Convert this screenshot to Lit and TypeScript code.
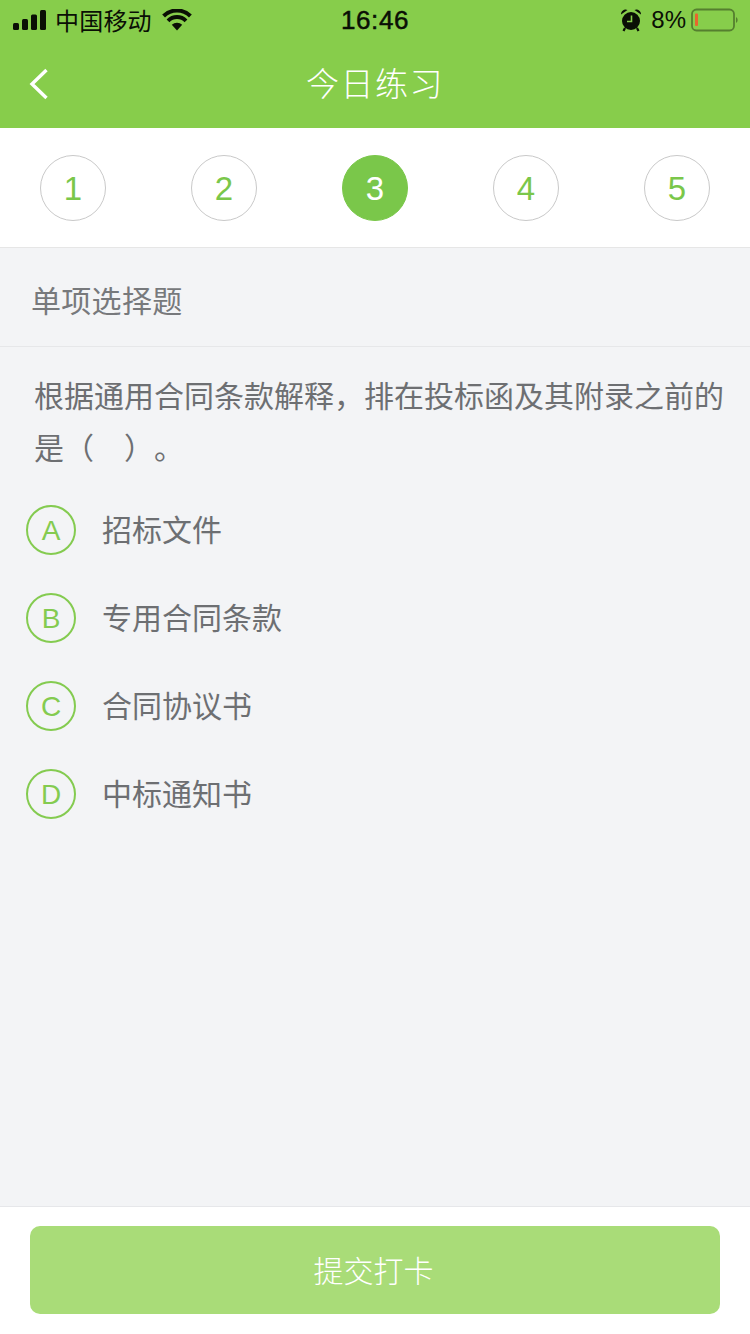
import { LitElement, html, css } from "lit";
import { customElement } from "lit/decorators.js";

@customElement("app-root")
export class AppRoot extends LitElement {
  static styles = css`
    :host {
      display: block;
      width: 750px;
      height: 1334px;
      font-family: "Noto Sans CJK SC", sans-serif;
      background: #f3f4f6;
    }
    .page { display: flex; flex-direction: column; height: 1334px; }
    .header { background: #87cd4b; height: 128px; display: flex; flex-direction: column; flex: none; }
    .status {
      height: 40px;
      display: grid;
      grid-template-columns: 1fr auto 1fr;
      align-items: center;
      padding: 0 13px;
      color: #0a0f05;
    }
    .status-left, .status-right { display: flex; align-items: center; }
    .status-right { justify-content: flex-end; }
    .carrier { font-size: 24px; line-height: 40px; margin-left: 8px; letter-spacing: 0.2px; font-weight: 400; }
    .wifi { margin-left: 10px; }
    .time { font-family: "Liberation Sans", sans-serif; font-size: 26px; line-height: 40px; -webkit-text-stroke: 0.5px #0a0f05; letter-spacing: 0.6px; }
    .pct { font-family: "Liberation Sans", sans-serif; font-size: 24px; margin-left: 9px; }
    .battery { margin-left: 5px; margin-right: -2px; }
    .nav { flex: 1; display: flex; align-items: center; justify-content: center; position: relative; padding-bottom: 5px; }
    .back { position: absolute; left: 29px; top: 28px; }
    .title { color: #fff; font-size: 33px; font-weight: 300; letter-spacing: 1.5px; }
    .steps {
      flex: none;
      background: #fff;
      height: 120px;
      box-sizing: border-box;
      border-bottom: 1px solid #e6e6e6;
      padding: 27px 40px 0;
      display: flex;
      justify-content: space-between;
      align-items: flex-start;
    }
    .step {
      box-sizing: border-box;
      width: 66px; height: 66px;
      border-radius: 50%;
      border: 1px solid #c9c9c9;
      color: #7ac74a;
      font-family: "Liberation Sans", sans-serif;
      font-size: 33px;
      padding-top: 1px;
      display: flex; align-items: center; justify-content: center;
    }
    .step.active { background: #7ac74a; border-color: #7ac74a; color: #fff; }
    .kind {
      flex: none;
      height: 99px;
      box-sizing: border-box;
      border-bottom: 1px solid #e6e7e9;
      padding: 4px 0 0 31px;
      display: flex; align-items: center;
      font-size: 30px;
      color: #77797c;
      letter-spacing: 0.3px;
    }
    .body { flex: 1; }
    .question {
      margin: 0;
      padding: 21px 20px 0 34px;
      font-size: 30px;
      line-height: 52px;
      color: #6d6f72;
      text-spacing-trim: space-all;
    }
    .options { display: flex; flex-direction: column; gap: 38px; padding: 33px 0 0 26px; }
    .option { display: flex; align-items: center; gap: 26px; height: 50px; }
    .letter {
      box-sizing: border-box;
      width: 50px; height: 50px;
      border: 2px solid #84cb50;
      border-radius: 50%;
      color: #84cb50;
      font-family: "Liberation Sans", sans-serif;
      font-size: 28px;
      padding-top: 2px;
      display: flex; align-items: center; justify-content: center;
      flex: none;
    }
    .text { font-size: 30px; color: #6d6f72; position: relative; top: -2px; }
    .footer {
      flex: none;
      height: 128px;
      box-sizing: border-box;
      background: #fff;
      border-top: 1px solid #e6e7ea;
      padding: 19px 30px 0;
    }
    .submit {
      box-sizing: border-box;
      height: 88px;
      border-radius: 10px;
      background: #a9dc78;
      color: #fff;
      font-size: 30px;
      font-weight: 300;
      display: flex; align-items: center; justify-content: center;
      padding: 0 3px 3px 0;
    }
  `;

  render() {
    const steps = [1, 2, 3, 4, 5];
    const options = [
      ["A", "招标文件"],
      ["B", "专用合同条款"],
      ["C", "合同协议书"],
      ["D", "中标通知书"],
    ];
    return html`
      <div class="page">
        <div class="header">
          <div class="status">
            <div class="status-left">
              <svg width="34" height="20" viewBox="0 0 34 20">
                <g fill="#0a0f05">
                  <rect x="0" y="13" width="6" height="7" rx="1.5" />
                  <rect x="9" y="9" width="6" height="11" rx="1.5" />
                  <rect x="18" y="4.5" width="6" height="15.5" rx="1.5" />
                  <rect x="27" y="0" width="6" height="20" rx="1.5" />
                </g>
              </svg>
              <span class="carrier">中国移动</span>
              <svg class="wifi" width="30" height="22" viewBox="0 0 30 22">
                <path d="M15 21.5 L9.8 15.8 A7.6 7.6 0 0 1 20.2 15.8 Z" fill="#0a0f05" />
                <path d="M6 11.8 A12.8 12.8 0 0 1 24 11.8" fill="none" stroke="#0a0f05" stroke-width="4" />
                <path d="M1.6 7 A19 19 0 0 1 28.4 7" fill="none" stroke="#0a0f05" stroke-width="4" />
              </svg>
            </div>
            <div class="time">16:46</div>
            <div class="status-right">
              <svg width="22" height="24" viewBox="0 0 22 24">
                <circle cx="11" cy="13" r="9" fill="#0a0f05" />
                <path d="M1 6.5 A4.6 4.6 0 0 1 7.5 2 Z M21 6.5 A4.6 4.6 0 0 0 14.5 2 Z" fill="#0a0f05" />
                <path d="M5 20 L3.5 23 M17 20 L18.5 23" stroke="#0a0f05" stroke-width="2.2" />
                <path d="M11.5 7.5 V13.5 H7" fill="none" stroke="#87cd4b" stroke-width="1.6" />
              </svg>
              <span class="pct">8%</span>
              <svg class="battery" width="48" height="24" viewBox="0 0 48 24">
                <rect x="1" y="1.5" width="42" height="21" rx="4.5" fill="none" stroke="#557f2f" stroke-width="1.8" />
                <rect x="4" y="5.5" width="3" height="12.5" rx="1" fill="#e8662e" />
                <path d="M45 9 A3.5 3.5 0 0 1 45 15 Z" fill="#557f2f" />
              </svg>
            </div>
          </div>
          <div class="nav">
            <svg class="back" width="20" height="32" viewBox="0 0 20 32">
              <path d="M17.5 2 L3 16 L17.5 30" fill="none" stroke="#fff" stroke-width="3.4" />
            </svg>
            <div class="title">今日练习</div>
          </div>
        </div>
        <div class="steps">
          ${steps.map((n) => html`<div class="step ${n === 3 ? "active" : ""}">${n}</div>`)}
        </div>
        <div class="kind">单项选择题</div>
        <div class="body">
          <p class="question">根据通用合同条款解释，排在投标函及其附录之前的是（　）。</p>
          <div class="options">
            ${options.map(
              ([l, t]) => html`<div class="option"><div class="letter">${l}</div><div class="text">${t}</div></div>`
            )}
          </div>
        </div>
        <div class="footer"><div class="submit">提交打卡</div></div>
      </div>
    `;
  }
}
